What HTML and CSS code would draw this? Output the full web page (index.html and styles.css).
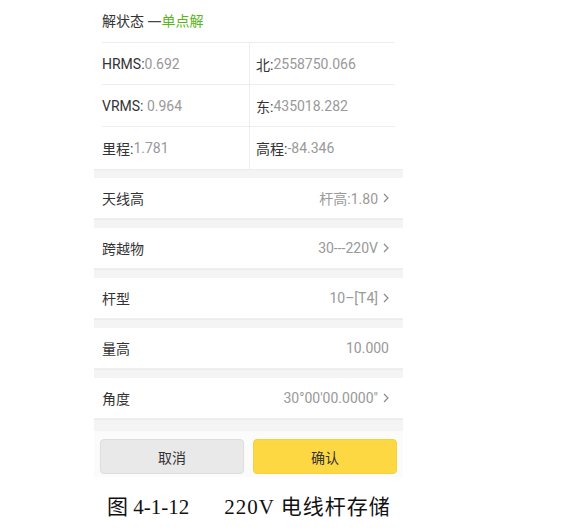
FILE: index.html
```html
<!DOCTYPE html>
<html lang="zh">
<head>
<meta charset="utf-8">
<link rel="stylesheet" href="styles.css">
</head>
<body>
<div class="panel">
  <div class="status">解状态 <span class="dash">一</span><span class="green">单点解</span></div>
  <div class="grid">
    <div class="cell left"><span class="k">HRMS:</span><span class="v">0.692</span></div>
    <div class="cell right"><span class="k">北:</span><span class="v">2558750.066</span></div>
    <div class="cell left"><span class="k">VRMS:</span><span class="v"> 0.964</span></div>
    <div class="cell right"><span class="k">东:</span><span class="v">435018.282</span></div>
    <div class="cell left last"><span class="k">里程:</span><span class="v">1.781</span></div>
    <div class="cell right last"><span class="k">高程:</span><span class="v">-84.346</span></div>
  </div>
  <div class="band"></div>
  <div class="row"><span class="label">天线高</span><span class="val">杆高:1.80<svg class="chev" viewBox="0 0 6 10"><path d="M1 1l4 4-4 4" fill="none" stroke="#8a8a8a" stroke-width="1.2"/></svg></span></div>
  <div class="band"></div>
  <div class="row"><span class="label">跨越物</span><span class="val">30---220V<svg class="chev" viewBox="0 0 6 10"><path d="M1 1l4 4-4 4" fill="none" stroke="#8a8a8a" stroke-width="1.2"/></svg></span></div>
  <div class="band"></div>
  <div class="row"><span class="label">杆型</span><span class="val">10–[T4]<svg class="chev" viewBox="0 0 6 10"><path d="M1 1l4 4-4 4" fill="none" stroke="#8a8a8a" stroke-width="1.2"/></svg></span></div>
  <div class="band"></div>
  <div class="row"><span class="label">量高</span><span class="val">10.000</span></div>
  <div class="band"></div>
  <div class="row"><span class="label">角度</span><span class="val">30°00'00.0000"<svg class="chev" viewBox="0 0 6 10"><path d="M1 1l4 4-4 4" fill="none" stroke="#8a8a8a" stroke-width="1.2"/></svg></span></div>
  <div class="band tall"></div>
  <div class="actions">
    <button class="btn cancel">取消</button>
    <button class="btn ok">确认</button>
  </div>
</div>
<div class="caption"><span class="fig">图 4-1-12</span><span class="title">220V 电线杆存储</span></div>
</body>
</html>
```

FILE: styles.css
```css
html, body {
  margin: 0;
  padding: 0;
  background: #ffffff;
}
body {
  font-family: Roboto, "Noto Sans CJK SC", sans-serif;
  color: #333333;
  font-size: 14px;
}
.panel {
  width: 309px;
  margin-left: 94px;
  display: flex;
  flex-direction: column;
}
.status {
  height: 28px;
  padding-top: 14px;
  margin: 0 8px;
  border-bottom: 1px solid #ededed;
  display: flex;
  align-items: flex-start;
  line-height: 1;
  white-space: pre;
  color: #333;
}
.dash {
  font-family: "Noto Sans CJK SC", sans-serif;
  color: #444;
}
.green {
  color: #5bb521;
}
.grid {
  margin: 0 8px;
  display: grid;
  grid-template-columns: 147px 146px;
}
.cell {
  height: 41px;
  border-bottom: 1px solid #ededed;
  display: flex;
  align-items: center;
}
.cell.last {
  height: 42px;
  border-bottom: none;
}
.cell.right {
  border-left: 1px solid #ededed;
  padding-left: 6px;
}
.k {
  color: #333;
}
.v {
  color: #999999;
  white-space: pre;
}
.band {
  height: 9px;
  background: #f4f4f4;
  border-top: 1px solid #ececec;
  box-sizing: border-box;
}
.band.tall {
  height: 12px;
}
.row {
  height: 41px;
  display: flex;
  align-items: center;
  justify-content: space-between;
  padding: 0 14px 0 8px;
  background: #fff;
  border-bottom: 1px solid #efefef;
  box-sizing: border-box;
}
.label {
  color: #333;
}
.val {
  color: #999999;
  display: flex;
  align-items: center;
}
.chev {
  width: 6px;
  height: 10px;
  margin-left: 5px;
}
.actions {
  background: #fbfbfb;
  display: flex;
  gap: 9px;
  padding: 8px 6px 3px 6px;
}
.btn {
  flex: 1;
  height: 35px;
  border-radius: 4px;
  font-family: Roboto, "Noto Sans CJK SC", sans-serif;
  font-size: 14px;
  color: #333;
  border: 1px solid #dddddd;
  padding: 0;
}
.cancel {
  background: #e9e9e9;
}
.ok {
  background: #fed843;
  border-color: #f5d040;
}
.caption {
  margin-left: 107px;
  margin-top: 16px;
  font-family: "Liberation Serif", "Noto Sans CJK SC", serif;
  font-size: 21px;
  color: #111;
  line-height: 28px;
  display: flex;
  gap: 35px;
  white-space: pre;
}
.title {
  letter-spacing: 1px;
}
```
